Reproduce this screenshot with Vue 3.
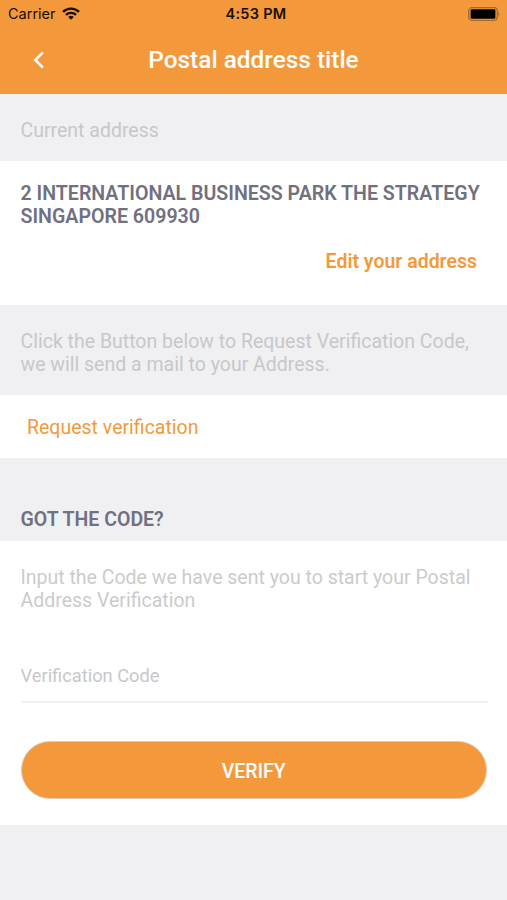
<script setup>
  /**
  * Postal Address Screen
  *
  * Shows the current postal address, lets the user request a verification
  * code by mail and enter the code once it has arrived.
  *
  * Props:
  * - title: String - The title in the navigation bar
  * - address: Array - The lines of the current address
  */

  import { ref } from 'vue';

  const props = defineProps({
    title: {
      type: String,
      default: 'Postal address title'
    },
    address: {
      type: Array,
      default: () => ['2 INTERNATIONAL BUSINESS PARK THE STRATEGY', 'SINGAPORE 609930']
    }
  });

  const code = ref('');
</script>

<template>
  <div class="screen">
    <header class="header">
      <!-- Status Bar -->
      <div class="status-bar">
        <div class="status-left">
          <span class="carrier">Carrier</span>
          <svg class="wifi" width="18" height="13" viewBox="0 0 18 13">
            <g fill="none" stroke="#1A0F04" stroke-width="2.4">
              <path d="M1 4.8C5.4 0.5 12.6 0.5 17 4.8" />
              <path d="M3.9 7.9C6.7 5.2 11.3 5.2 14.1 7.9" />
            </g>
            <path d="M6.2 9.9C7.8 8.4 10.2 8.4 11.8 9.9L9 12.7Z" fill="#1A0F04" />
          </svg>
        </div>
        <span class="time">4:53 PM</span>
        <div class="status-right">
          <svg width="33" height="14" viewBox="0 0 33 14">
            <rect x="0.7" y="0.7" width="28.6" height="12.6" rx="3.2" fill="none" stroke="#A9692A" stroke-width="1.3" />
            <rect x="2.6" y="2.2" width="24.8" height="9.6" rx="1.4" fill="#000000" />
            <path d="M30.4 5C31.8 5.5 31.8 8.5 30.4 9Z" fill="#A9692A" />
          </svg>
        </div>
      </div>

      <!-- Navigation Bar -->
      <div class="nav-bar">
        <button class="back" aria-label="Back">
          <svg width="12" height="18" viewBox="0 0 12 18">
            <path d="M9.9 1.4L2.3 9L9.9 16.6" fill="none" stroke="#FFFFFF" stroke-width="2.5" />
          </svg>
        </button>
        <h1 class="title">{{ props.title }}</h1>
      </div>
    </header>

    <!-- Current Address -->
    <p class="hint">Current address</p>
    <section class="card card-address">
      <p class="address">
        <span v-for="line in props.address" :key="line" class="address-line">{{ line }}</span>
      </p>
      <a class="edit">Edit your address</a>
    </section>

    <!-- Request Code -->
    <p class="hint">Click the Button below to Request Verification Code,<br>we will send a mail to your Address.</p>
    <section class="card card-request">
      <a class="request">Request verification</a>
    </section>

    <!-- Enter Code -->
    <h2 class="code-heading">GOT THE CODE?</h2>
    <section class="card card-code">
      <p class="code-hint">Input the Code we have sent you to start your Postal<br>Address Verification</p>
      <input v-model="code" class="code-input" type="text" placeholder="Verification Code">
      <button class="verify">VERIFY</button>
    </section>
  </div>
</template>

<style>
  body {
    margin: 0;
    background: #F0F0F3;
  }
</style>

<style scoped>
  .screen {
    box-sizing: border-box;
    min-height: 900px;
    background: #F0F0F3;
    font-family: Roboto, "Liberation Sans", sans-serif;
    font-size: 19.5px;
    line-height: 23px;
  }

  p,
  h1,
  h2 {
    margin: 0;
  }

  button {
    font-family: inherit;
  }

  .header {
    height: 94px;
    background: #F4993B;
  }

  .status-bar {
    display: grid;
    grid-template-columns: 1fr auto 1fr;
    align-items: center;
    height: 27px;
    padding: 0 6px 0 8px;
    font-family: Inter, "Liberation Sans", sans-serif;
    font-size: 14.5px;
    color: #1A0F04;
  }

  .status-left {
    display: flex;
    align-items: center;
    gap: 6px;
  }

  .time {
    margin-left: 3px;
    font-weight: 600;
    letter-spacing: 0.3px;
  }

  .status-right {
    display: flex;
    justify-content: flex-end;
  }

  .nav-bar {
    display: grid;
    grid-template-columns: 60px 1fr 60px;
    align-items: center;
    height: 66px;
  }

  .back {
    display: flex;
    justify-content: flex-end;
    padding: 0 15px 0 0;
    border: none;
    background: none;
  }

  .title {
    font-weight: 500;
    font-size: 24.4px;
    line-height: 28px;
    text-align: center;
    color: #FFFFFF;
  }

  .hint {
    padding: 25px 0 19px 20.5px;
    color: #C7C7C9;
  }

  .card {
    box-sizing: border-box;
    display: flex;
    flex-direction: column;
    background: #FFFFFF;
  }

  .card-address {
    height: 144px;
    padding: 21px 21px 0 20.5px;
  }

  .address {
    font-weight: 600;
    font-size: 19.6px;
    color: #70707F;
  }

  .address-line {
    display: block;
    white-space: nowrap;
  }

  .edit {
    align-self: flex-end;
    margin: 22px 9px 0 0;
    font-weight: 600;
    color: #F4993B;
  }

  .card-request {
    height: 63px;
    padding: 21px 0 0 27px;
  }

  .request {
    color: #F4993B;
  }

  .code-heading {
    padding: 50px 0 10px 20.5px;
    font-weight: 600;
    font-size: 19.5px;
    line-height: 23px;
    color: #70707F;
  }

  .card-code {
    height: 284px;
    padding: 25px 19px 0 20.5px;
  }

  .code-hint {
    color: #CBCBCB;
  }

  .code-input {
    box-sizing: border-box;
    height: 52px;
    margin-top: 39px;
    padding: 0 0 2px;
    border: none;
    border-bottom: 2px solid #F1F1F2;
    outline: none;
    background: none;
    font-family: inherit;
    font-size: 18.3px;
  }

  .code-input::placeholder {
    color: #C7C7CC;
    opacity: 1;
  }

  .verify {
    height: 58px;
    margin: 38px 1px 0 0;
    padding: 2px 0 0;
    border: 1px solid #E3C8AE;
    border-radius: 29px;
    background: #F4993B;
    font-weight: 500;
    font-size: 19.5px;
    color: #FFFFFF;
  }
</style>
